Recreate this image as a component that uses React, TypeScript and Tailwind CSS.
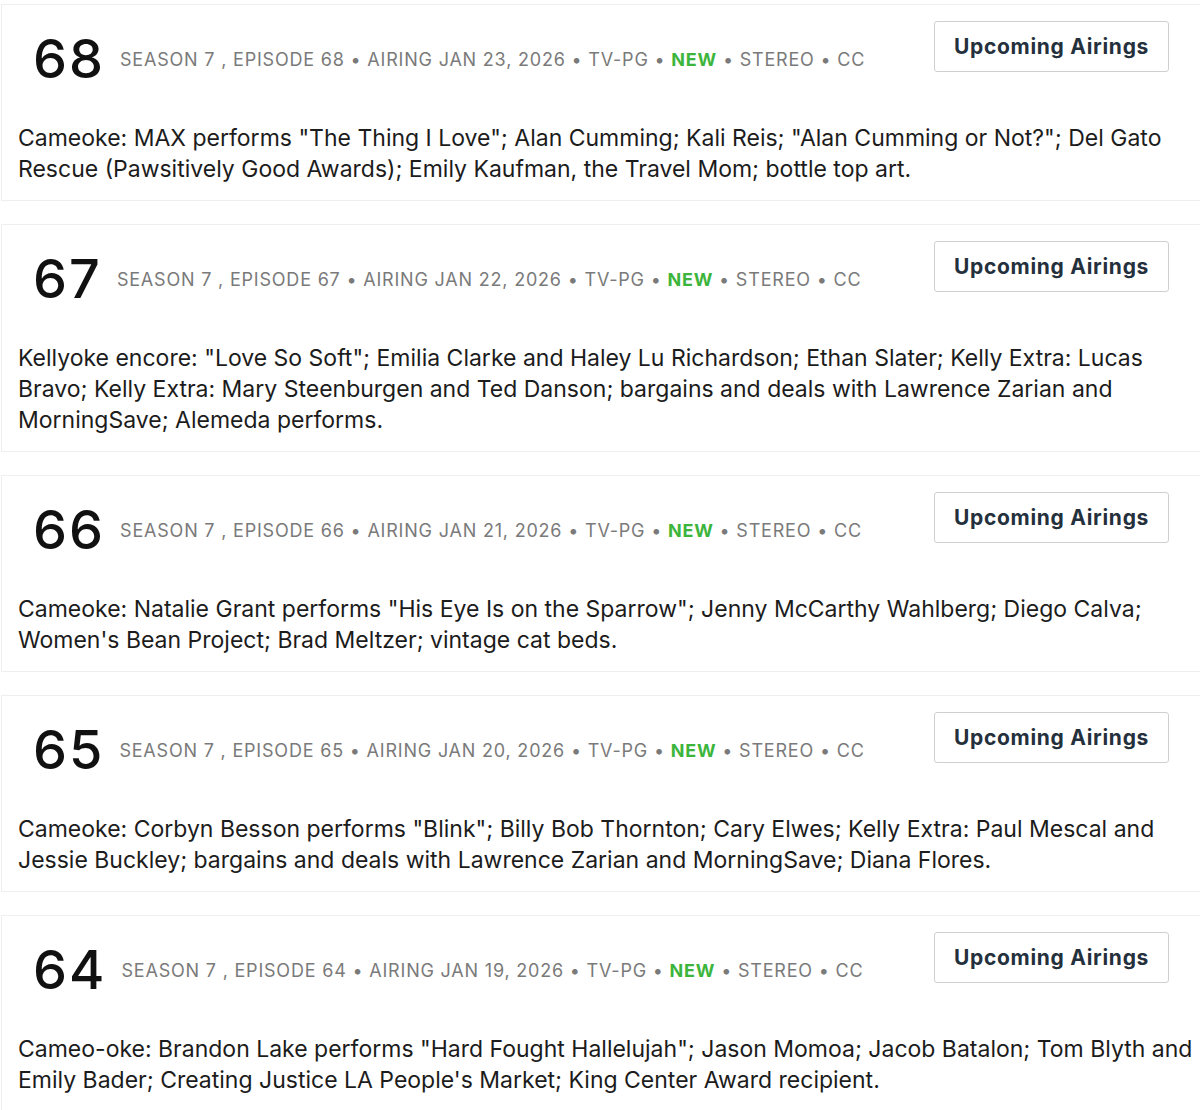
import React from "react";

type Ep = { n: number; date: string; text: string };

const eps: Ep[] = [
  {
    n: 68,
    date: "JAN 23, 2026",
    text: 'Cameoke: MAX performs "The Thing I Love"; Alan Cumming; Kali Reis; "Alan Cumming or Not?"; Del Gato Rescue (Pawsitively Good Awards); Emily Kaufman, the Travel Mom; bottle top art.',
  },
  {
    n: 67,
    date: "JAN 22, 2026",
    text: 'Kellyoke encore: "Love So Soft"; Emilia Clarke and Haley Lu Richardson; Ethan Slater; Kelly Extra: Lucas Bravo; Kelly Extra: Mary Steenburgen and Ted Danson; bargains and deals with Lawrence Zarian and MorningSave; Alemeda performs.',
  },
  {
    n: 66,
    date: "JAN 21, 2026",
    text: 'Cameoke: Natalie Grant performs "His Eye Is on the Sparrow"; Jenny McCarthy Wahlberg; Diego Calva; Women\'s Bean Project; Brad Meltzer; vintage cat beds.',
  },
  {
    n: 65,
    date: "JAN 20, 2026",
    text: 'Cameoke: Corbyn Besson performs "Blink"; Billy Bob Thornton; Cary Elwes; Kelly Extra: Paul Mescal and Jessie Buckley; bargains and deals with Lawrence Zarian and MorningSave; Diana Flores.',
  },
  {
    n: 64,
    date: "JAN 19, 2026",
    text: 'Cameo-oke: Brandon Lake performs "Hard Fought Hallelujah"; Jason Momoa; Jacob Batalon; Tom Blyth and Emily Bader; Creating Justice LA People\'s Market; King Center Award recipient.',
  },
];

function Card({ ep }: { ep: Ep }) {
  return (
    <div className="ml-px w-[1210px] border border-[#efefef] bg-white pt-[16px] pb-[15px]">
      <div className="flex items-start justify-between pr-[41px]">
        <div className="mt-[11px] flex items-center pl-[31px]">
          <span className="text-[54px] font-medium leading-none tracking-[2px] text-[#111]">
            {ep.n}
          </span>
          <span className="ml-[15px] mt-[1px] text-[18px] tracking-[0.8px] text-[#7a7a7a]">
            SEASON 7 , EPISODE {ep.n} • AIRING {ep.date} • TV-PG •{" "}
            <span className="font-bold text-[#3db53d]">NEW</span> • STEREO • CC
          </span>
        </div>
        <button className="h-[51px] w-[235px] rounded-[3px] border border-[#cfcfcf] bg-white text-[21px] font-bold tracking-[0.7px] text-[#25303d]">
          Upcoming Airings
        </button>
      </div>
      <p className="mt-[37px] w-[1193px] pl-[16px] text-[23px] leading-[31px] text-[#1c1c1c]">
        {ep.text}
      </p>
    </div>
  );
}

export default function App() {
  return (
    <div
      className="min-h-[1110px] w-[1200px] overflow-hidden bg-white pt-[4px]"
      style={{ fontFamily: "Inter, 'Noto Sans', sans-serif" }}
    >
      <div className="flex flex-col gap-[23px]">
        {eps.map((e) => (
          <Card key={e.n} ep={e} />
        ))}
      </div>
    </div>
  );
}
